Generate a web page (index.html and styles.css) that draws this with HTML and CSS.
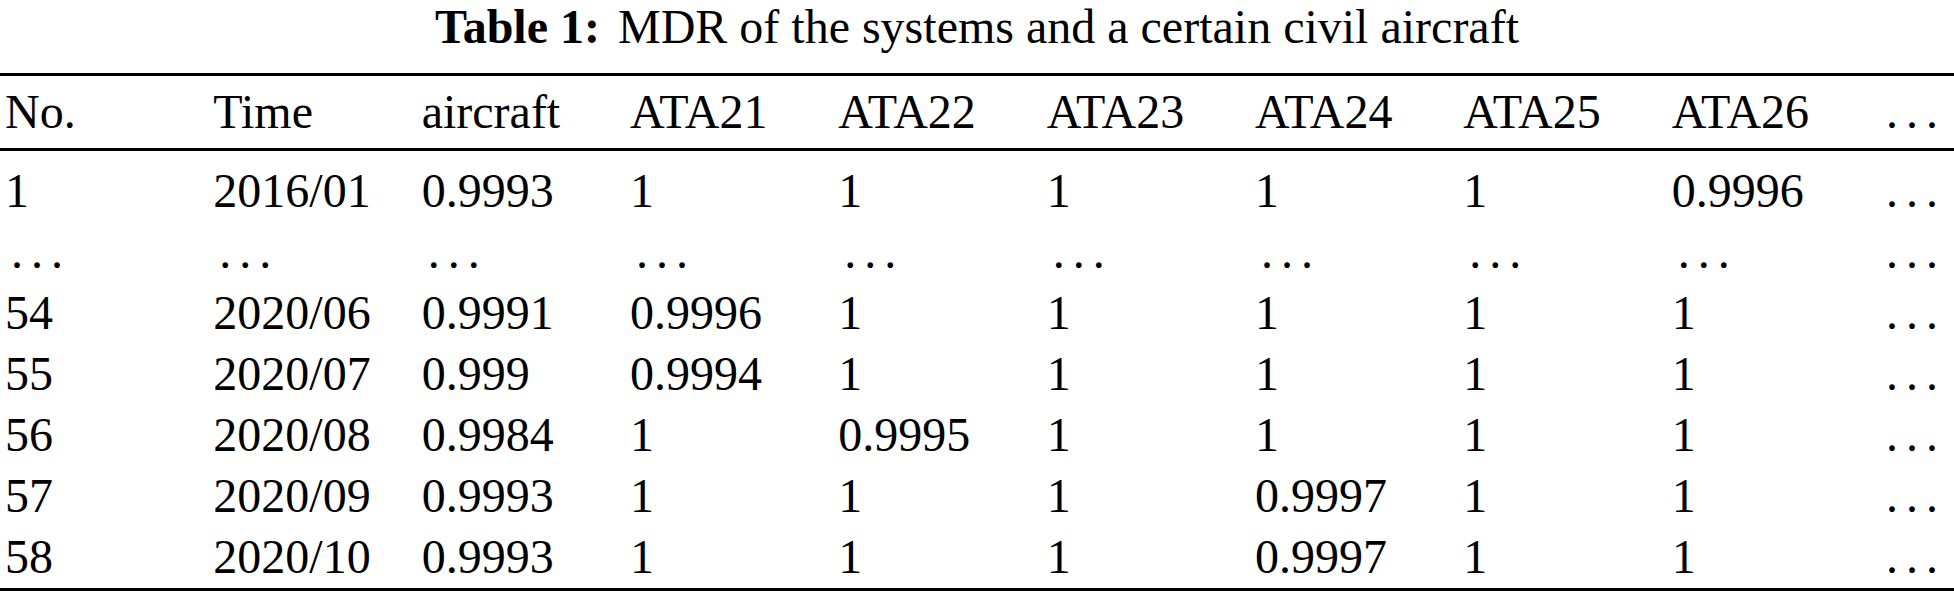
FILE: index.html
```html
<!DOCTYPE html>
<html lang="en">

<head>
    <meta charset="UTF-8">
    <meta name="viewport" content="width=device-width, initial-scale=1.0">
    <title>Table 1: MDR of the systems and a certain civil aircraft</title>
    <link rel="stylesheet" href="styles.css">
</head>

<body>
    <div class="caption"><span class="caption-label">Table 1:</span> MDR of the systems and a certain civil aircraft</div>
    <div class="mdr-table">
        <div class="row head">
            <div>No.</div><div>Time</div><div>aircraft</div><div>ATA21</div><div>ATA22</div><div>ATA23</div><div>ATA24</div><div>ATA25</div><div>ATA26</div><div><span class="dots">...</span></div>
        </div>
        <div class="row first">
            <div>1</div><div>2016/01</div><div>0.9993</div><div>1</div><div>1</div><div>1</div><div>1</div><div>1</div><div>0.9996</div><div><span class="dots">...</span></div>
        </div>
        <div class="row">
            <div><span class="dots">...</span></div><div><span class="dots">...</span></div><div><span class="dots">...</span></div><div><span class="dots">...</span></div><div><span class="dots">...</span></div><div><span class="dots">...</span></div><div><span class="dots">...</span></div><div><span class="dots">...</span></div><div><span class="dots">...</span></div><div><span class="dots">...</span></div>
        </div>
        <div class="row">
            <div>54</div><div>2020/06</div><div>0.9991</div><div>0.9996</div><div>1</div><div>1</div><div>1</div><div>1</div><div>1</div><div><span class="dots">...</span></div>
        </div>
        <div class="row">
            <div>55</div><div>2020/07</div><div>0.999</div><div>0.9994</div><div>1</div><div>1</div><div>1</div><div>1</div><div>1</div><div><span class="dots">...</span></div>
        </div>
        <div class="row">
            <div>56</div><div>2020/08</div><div>0.9984</div><div>1</div><div>0.9995</div><div>1</div><div>1</div><div>1</div><div>1</div><div><span class="dots">...</span></div>
        </div>
        <div class="row">
            <div>57</div><div>2020/09</div><div>0.9993</div><div>1</div><div>1</div><div>1</div><div>0.9997</div><div>1</div><div>1</div><div><span class="dots">...</span></div>
        </div>
        <div class="row last">
            <div>58</div><div>2020/10</div><div>0.9993</div><div>1</div><div>1</div><div>1</div><div>0.9997</div><div>1</div><div>1</div><div><span class="dots">...</span></div>
        </div>
    </div>
</body>

</html>
```

FILE: styles.css
```css
body {
    font-family: "Liberation Serif", "Times New Roman", serif;
    font-size: 48px;
    background-color: #fff;
    color: #000;
    margin: 0;
    padding: 0;
}

.caption {
    text-align: center;
    line-height: 53px;
    height: 53px;
    margin-bottom: 20px;
    white-space: nowrap;
}

.caption-label {
    font-weight: bold;
    margin-right: 6px;
}

.mdr-table {
    border-top: 3px solid #000;
    border-bottom: 3px solid #000;
}

.row {
    display: grid;
    grid-template-columns: repeat(9, 208.33px) 1fr;
    padding: 4px 0 4px 5px;
    line-height: 53px;
    white-space: nowrap;
}

.row.head {
    padding-top: 9px;
    padding-bottom: 10px;
    border-bottom: 3px solid #000;
}

.row.first {
    padding-top: 13px;
}

.row.last {
    padding-bottom: 5px;
}

.dots {
    margin-left: 6px;
    letter-spacing: 8px;
}
```
